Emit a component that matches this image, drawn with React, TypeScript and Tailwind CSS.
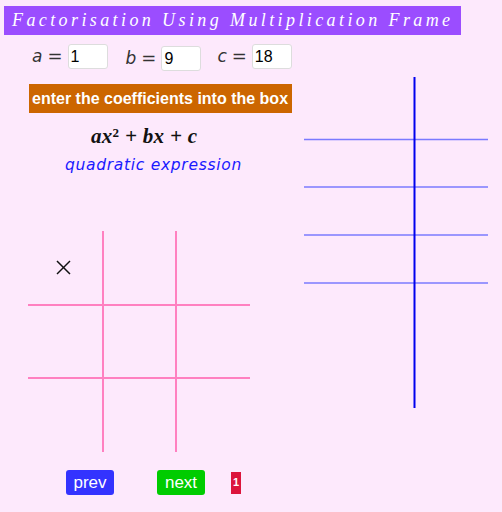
import React from "react"

const Field = ({ label, value, offset }: { label: string; value: string; offset: string }) => (
  <div className={`flex items-center ${offset}`}>
    <span className="text-[17px] italic text-[#333] [font-family:'DejaVu_Sans',sans-serif]">{label}</span>
    <span className="mx-[5px] text-[18px] text-[#333] [font-family:'DejaVu_Serif',serif]">=</span>
    <div className="w-[40px] h-[25px] bg-white border border-[#ddd] rounded-[3px] pl-[2px] flex items-center text-[16px] text-black [font-family:'Liberation_Sans',sans-serif]">
      {value}
    </div>
  </div>
)

export default function App() {
  return (
    <div className="relative w-[502px] h-[512px] overflow-hidden bg-[#fde9fc]">
      <div className="flex flex-col">
        {/* title */}
        <div className="ml-[4px] mt-[6px] w-[457px] h-[29px] bg-[#9b4dff] flex items-center pl-[8px]">
          <span className="whitespace-nowrap text-white italic text-[18px] tracking-[3.4px] [font-family:'Liberation_Serif',serif]">
            Factorisation Using Multiplication Frame
          </span>
        </div>

        {/* coefficient inputs */}
        <div className="flex items-start mt-[8px] pl-[32px]">
          <Field label="a" value="1" offset="" />
          <Field label="b" value="9" offset="ml-[18px] mt-[2px]" />
          <Field label="c" value="18" offset="ml-[16px]" />
        </div>

        <div className="ml-[29px] mt-[12px] w-[263px] h-[29px] bg-[#cc6600] flex items-center pl-[3px]">
          <span className="text-white font-bold text-[16px] [font-family:'Liberation_Sans',sans-serif]">
            enter the coefficients into the box
          </span>
        </div>

        <div className="ml-[91px] mt-[10px] text-[21px] font-bold italic text-[#111] [font-family:'Liberation_Serif',serif] leading-[26px] tracking-[0.3px]">
          ax<sup className="text-[13px] not-italic">2</sup> + bx + c
        </div>
        <div className="ml-[65px] mt-[5px] text-[15.5px] italic text-[#1a1aff] tracking-[0.7px] [font-family:'DejaVu_Sans',sans-serif]">
          quadratic expression
        </div>
      </div>

      {/* multiplication frame (left) */}
      <svg className="absolute left-0 top-0" width="502" height="512">
        <g stroke="#ff80c0" strokeWidth="2">
          <line x1="103" y1="231" x2="103" y2="452" />
          <line x1="176" y1="231" x2="176" y2="452" />
          <line x1="28" y1="305" x2="250" y2="305" />
          <line x1="28" y1="378" x2="250" y2="378" />
        </g>
        <g stroke="#111" strokeWidth="1.5">
          <line x1="57" y1="261" x2="70" y2="274" />
          <line x1="70" y1="261" x2="57" y2="274" />
        </g>
        {/* right frame */}
        <g stroke="#7a7aff" strokeWidth="1.6">
          <line x1="304" y1="139.5" x2="488" y2="139.5" />
          <line x1="304" y1="187" x2="488" y2="187" />
          <line x1="304" y1="235" x2="488" y2="235" />
          <line x1="304" y1="283" x2="488" y2="283" />
        </g>
        <line x1="414.5" y1="77" x2="414.5" y2="408" stroke="#0000ee" strokeWidth="2" />
      </svg>

      {/* navigation */}
      <div className="absolute left-[66px] top-[470px] flex items-center">
        <button className="w-[48px] h-[25px] rounded-[3px] bg-[#3333ff] text-white text-[17px] flex items-center justify-center [font-family:'Liberation_Sans',sans-serif]">
          prev
        </button>
        <button className="ml-[43px] w-[48px] h-[25px] rounded-[3px] bg-[#00cc00] text-white text-[17px] flex items-center justify-center [font-family:'Liberation_Sans',sans-serif]">
          next
        </button>
        <div className="ml-[26px] w-[10px] h-[22px] bg-[#dc143c] text-white text-[11px] font-bold flex items-center justify-center [font-family:'Liberation_Sans',sans-serif]">
          1
        </div>
      </div>
    </div>
  )
}
